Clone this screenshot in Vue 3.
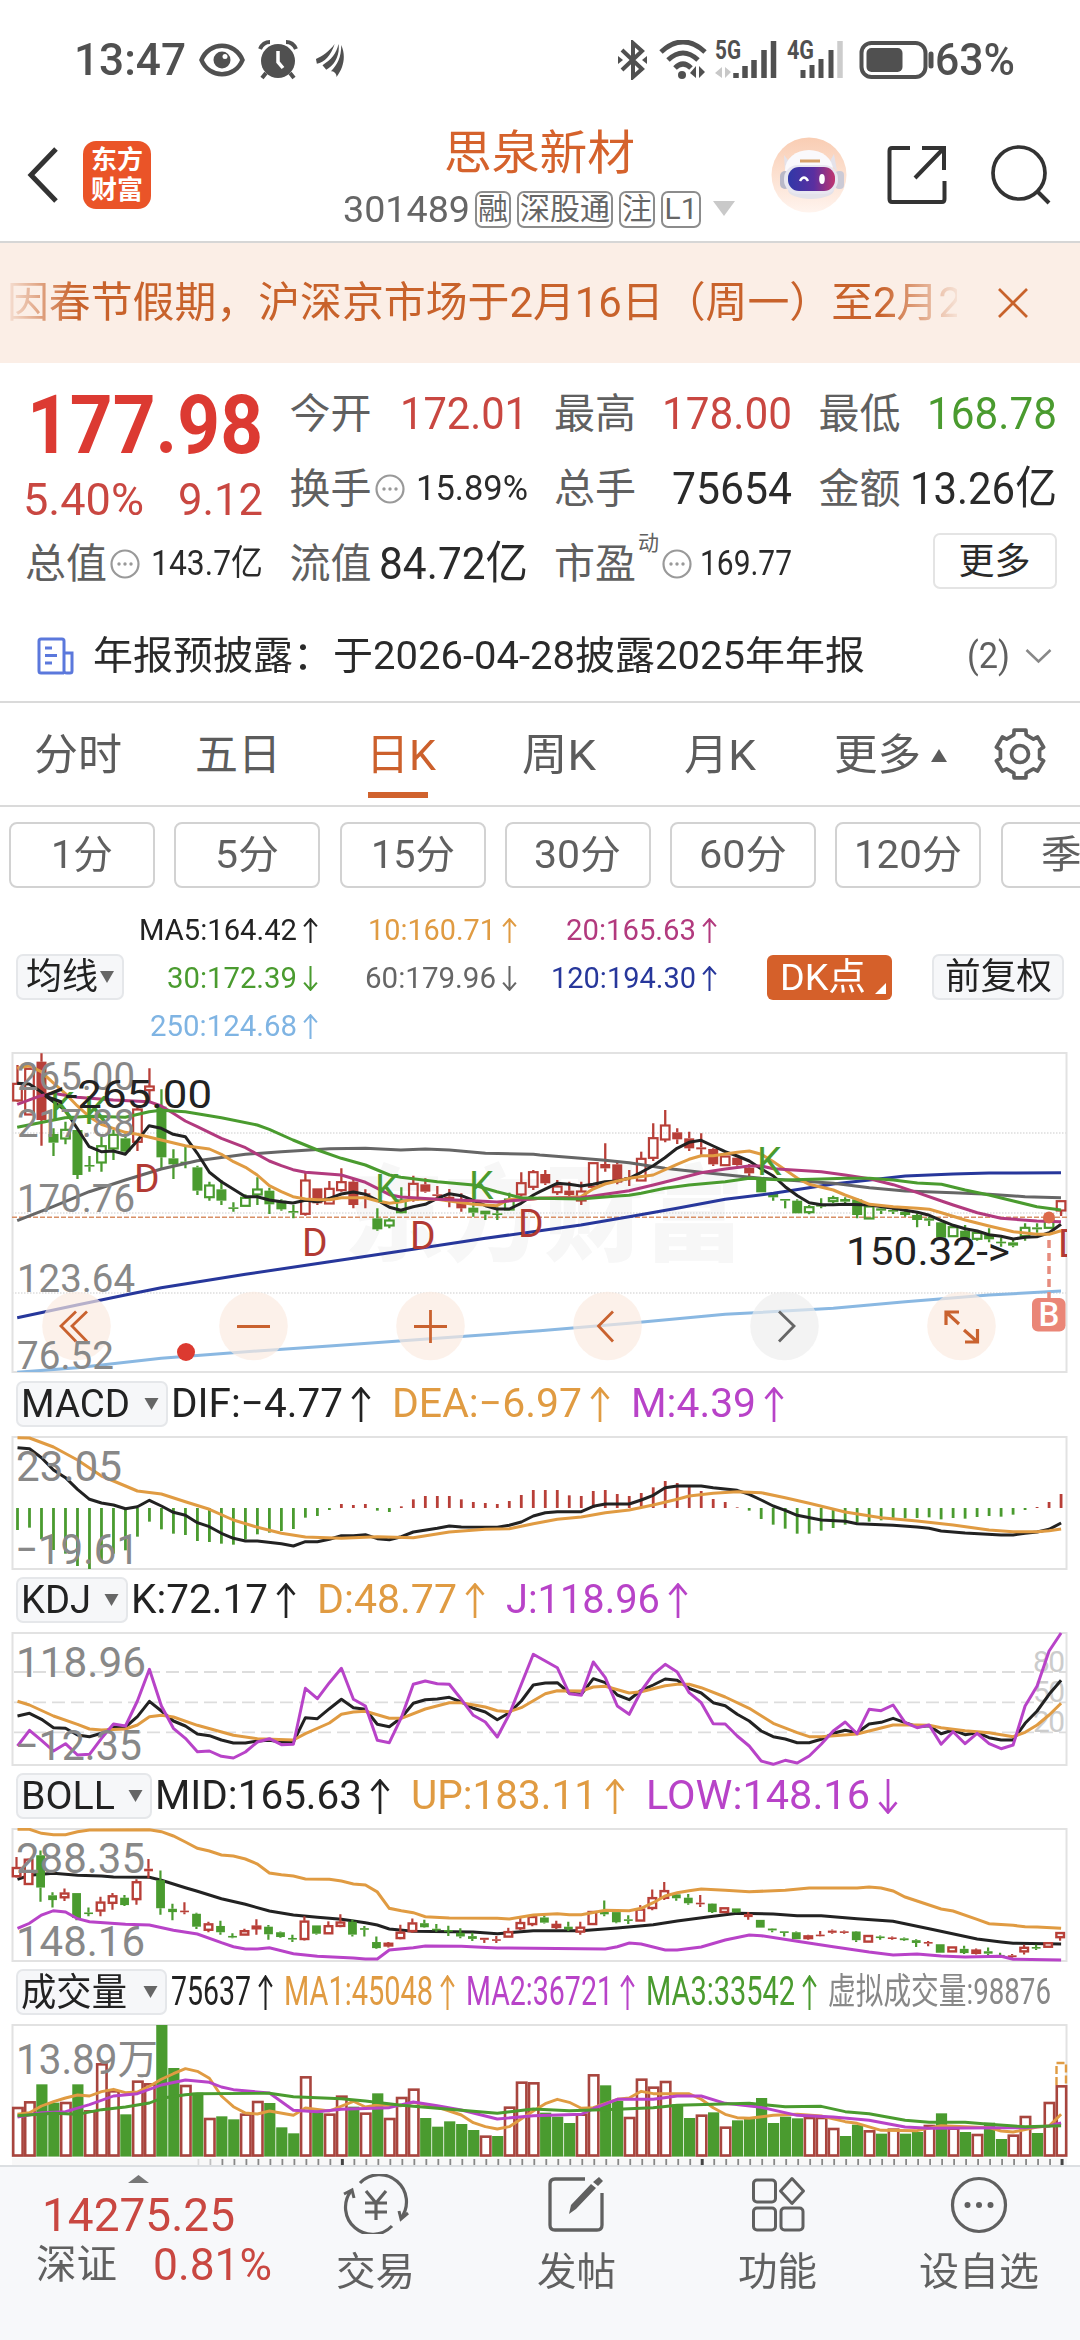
<script setup>
import { h } from 'vue'

// Condenses or widens a label so that it occupies exactly the given width.
const vFit = {
  mounted(el, { value }) {
    const natural = el.getBoundingClientRect().width
    el.style.transform = `scaleX(${value / natural})`
    el.style.marginRight = `${value - natural}px`
  }
}

const Arrow = (p) =>
  h('svg', { class: 'arrow', width: p.w, height: p.hh, viewBox: '0 0 20 36', preserveAspectRatio: 'none', style: { flex: 'none' } }, [
    h('path', {
      d: p.down ? 'M10 0V35M1.500 24L10 34.500L18.500 24' : 'M10 36V1M1.500 12L10 1.500L18.500 12',
      fill: 'none', stroke: 'currentColor', 'stroke-width': 2.7
    })
  ])
Arrow.props = ['w', 'hh', 'down']

const Dots = () =>
  h('svg', { class: 'dots', width: 30, height: 30, viewBox: '0 0 30 30', style: { flex: 'none' } }, [
    h('circle', { cx: 15, cy: 15, r: 13.5, fill: 'none', stroke: '#999', 'stroke-width': 2.2 }),
    ...[9, 15, 21].map((x) => h('circle', { cx: x, cy: 15, r: 1.7, fill: '#999' }))
  ])

const RED = '#b83f38', GREEN = '#4a9b2f'
const tabs = [['分时', 88, 34, 0], ['五日', 86, 194, 0], ['日K', 70, 366, 1], ['周K', 74, 521, 0], ['月K', 72, 683, 0]]
const periods = [['1分', 62], ['5分', 64], ['15分', 84], ['30分', 87], ['60分', 88], ['120分', 108], ['季K', 66]]
const mas = [
  ['MA5:164.42', 158, '#222', 0], ['10:160.71', 128, '#e09b42', 0], ['20:165.63', 130, '#b23a7e', 0],
  ['30:172.39', 130, '#4a9b2f', 1], ['60:179.96', 131, '#666', 1], ['120:194.30', 145, '#27379b', 0],
  ['250:124.68', 147, '#7fb4e3', 0]
]

// [kind, body top, body bottom, wick top, wick bottom]; R/G hollow, r/g filled
const raw = `R115,168,60,170 R70,210,68,210 r50,225,25,302 g267,293,250,333 G253,282,230,298 g255,390,255,402 g360,364,333,380 G302,354,275,380 G268,312,255,345 g280,320,265,325 R192,292,180,318 R123,137,70,175 g185,337,133,372 g340,358,313,402 g350,356,305,370 g367,437,362,450 G420,458,410,467 g433,467,405,480 g487,491,472,500 G457,484,448,484 G432,450,397,480 g437,478,428,507 g467,493,463,497 g498,503,480,520 R405,508,380,512 r430,475,430,480 R430,477,408,477 R410,437,370,440 r410,480,400,490 r445,450,433,490 g520,553,490,557 G525,543,520,550 G465,503,427,505 R415,465,392,470 r418,440,400,443 r448,452,423,465 r455,462,432,487 r470,490,445,500 g488,503,470,515 g497,508,497,525 g505,510,487,525 G462,495,443,495 R413,450,382,455 R380,427,375,435 r387,415,375,420 R423,443,405,450 r437,450,410,460 R438,468,410,480 R353,427,353,427 r357,370,295,380 r358,413,350,418 r397,400,375,423 R340,408,320,408 R278,340,235,348 R240,285,195,292 r262,283,250,297 r280,310,260,318 r307,313,265,330 r312,358,310,363 R333,362,333,362 r338,360,338,362 r368,385,357,400 g400,442,400,442 g447,457,445,467 g462,466,462,490 g467,505,463,505 G485,503,480,508 g480,483,460,490 G458,470,452,475 g462,470,457,475 g463,510,460,520 G483,522,483,522 g490,497,485,507 g495,500,490,507 g500,510,495,515 g510,525,505,547 g520,527,515,543 g532,578,532,578 G545,575,545,575 g557,580,540,585 G562,583,555,587 g570,583,550,592 g590,595,578,605 g592,602,585,607 G547,575,535,587 g547,553,535,563 G522,550,522,550 R467,498,467,513`.split(' ')
const bollKinds = 'RRggRggRRgRrggrgRggRRgggRgRRgggRRRgggggRRRRRgRgRRgggRRRggrgRgrggggRrRrgRgrggrgRgRggrRgRR'
const nx = (n) => 17.5 + 11.995 * n

function makeCandle(kind, v, n, map) {
  const [bt, bb, wt, wb] = v.map(map)
  const hollow = kind === 'R' || kind === 'G'
  const H = Math.max(bb - bt, 1.6)
  return { x: nx(n), bt, bb: bt + H, H, wt, wb, hollow: hollow && H > 2.5, c: kind.toLowerCase() === 'r' ? RED : GREEN }
}
const candles = raw.map((s, n) => makeCandle(s[0], s.slice(1).split(',').map(Number), n, (y) => 1045 + y / 3))
const bollCandles = raw.map((s, n) => makeCandle(bollKinds[n] || 'g', s.slice(1).split(',').map(Number), n, (y) => 1765 + (240 + 0.554 * y) / 3))

const W = 1568
const mainPath = (a, b) => {
  const p = (s, o) => s.split(' ').map((q) => { const [x, y] = q.split(',').map(Number); return `${((x + o) / 2.904).toFixed(1)},${(1045 + y / 3).toFixed(1)}` })
  return [...p(a, 0), ...p(b, W)].join(' ')
}
const mainLines = [
  ['#8ab8e2', mainPath('50,982 224,968 468,940 747,918 957,903 1270,880', '0,857 259,835 538,808 852,790 1061,770 1304,750 1513,738')],
  ['#27379b', mainPath('50,818 224,780 364,750 468,728 713,688 957,650 1200,613 1410,580', '0,557 119,540 259,515 398,490 538,463 678,445 852,417 957,405 1061,393 1200,387 1304,384 1513,383')],
  ['#666', mainPath('50,527 154,485 259,440 364,405 468,372 573,347 713,328 817,320 957,311 1061,310 1164,315 1235,312 1305,315 1410,325 1549,328', '0,330 119,340 189,346 259,353 363,370 468,382 573,393 643,400 748,407 852,415 957,428 1061,438 1200,443 1304,448 1409,455 1513,458')],
  ['#222', mainPath('50,115 85,117 119,140 135,155 189,195 224,250 259,305 294,320 329,318 364,328 399,287 433,242 468,250 503,268 538,275 573,325 608,382 643,410 678,433 713,455 747,455 782,465 817,470 851,474 887,466 922,470 957,460 991,447 1026,441 1061,448 1096,466 1131,487 1164,496 1200,485 1235,478 1270,460 1305,446 1340,452 1375,466 1410,482 1443,492 1479,492 1513,475 1549,450', '0,440 50,415 85,418 119,423 154,418 189,410 224,408 259,400 294,382 329,362 363,338 398,310 433,292 468,286 503,303 538,320 573,333 608,348 643,372 678,393 712,425 748,452 782,473 817,479 852,479 886,478 957,480 1026,490 1096,502 1131,511 1166,527 1200,541 1235,551 1270,558 1304,569 1339,574 1375,582 1409,577 1443,575 1479,563 1513,538')],
  ['#e09b42', mainPath('50,70 85,62 119,80 154,113 189,145 224,182 259,215 294,238 329,250 364,262 399,268 468,285 538,302 608,312 643,328 678,350 713,367 747,390 782,422 817,440 851,455 887,462 922,464 957,464 991,458 1061,458 1096,468 1131,475 1164,470 1200,463 1270,463 1305,468 1375,478 1443,482 1479,463 1549,462', '0,460 50,458 119,455 154,432 189,417 259,400 329,390 398,358 433,343 468,332 503,332 573,322 608,318 643,328 678,350 712,374 748,400 782,418 852,435 886,450 921,463 957,478 1026,485 1096,490 1131,493 1166,503 1235,525 1304,543 1375,560 1443,568 1479,568 1513,557')],
  ['#b23a7e', mainPath('50,178 119,152 154,145 224,157 329,165 433,170 468,183 503,205 538,228 573,245 643,280 713,308 782,348 817,362 851,374 887,382 991,390 1061,412 1096,430 1131,449 1164,456 1270,463 1375,467 1443,471 1513,465', '0,460 119,458 189,448 259,437 329,420 398,402 468,383 538,372 608,363 643,363 678,371 817,380 886,390 957,401 1026,419 1096,443 1166,468 1200,480 1270,503 1339,520 1443,528 1513,530')],
  ['#4a9b2f', mainPath('50,247 189,218 259,214 364,217 433,200 468,196 538,200 643,218 747,240 782,253 851,285 922,315 991,340 1061,360 1096,375 1131,390 1164,397 1270,410 1375,420 1443,440 1513,458', '0,460 119,462 224,453 259,451 294,445 363,430 433,420 538,410 608,400 712,405 817,402 886,400 957,400 1026,405 1096,414 1166,418 1235,435 1304,450 1375,468 1443,485 1513,495')]
]
const axis = [['265.00', 1090, 116], ['217.88', 1136.500, 116], ['170.76', 1211.500, 116], ['123.64', 1291.500, 116], ['76.52', 1368.500, 95]]
const marks = [
  ['K', 50, 1120], ['K', 84, 1124], ['D', 134, 1191.500], ['D', 302, 1256], ['K', 375, 1202], ['D', 410, 1248.500], ['K', 469, 1198.500],
  ['D', 518, 1236.500], ['K', 757, 1174.500], ['D', 1058, 1257]
]
const tools = [76.5, 253.5, 430.5, 607.5, 784.5, 961.5]

const sparse = (s, base) => s.split(' ').map((q) => { const [n, y] = q.split(',').map(Number); return `${nx(n).toFixed(1)},${(base + y / 3).toFixed(1)}` }).join(' ')
const dense = (s, base) => s.split(' ').map((y, n) => `${nx(n).toFixed(1)},${(base + y / 3).toFixed(1)}`).join(' ')

const macdBars = '462 455 490 522 533 570 579 558 533 523 482 437 460 473 477 495 498 503 506 490 475 470 465 459 425 420 402 384 387 384 404 408 391 370 360 360 360 370 378 381 384 375 357 342 342 342 358 360 345 342 354 360 351 334 315 321 333 345 369 378 394 404 429 446 458 473 473 464 456 446 440 437 433 430 427 426 424 430 426 428 423 420 422 416 402 393 378 354'.split(' ').map(Number)
const macdLines = [
  ['#222', sparse('0,215 1,218 2,245 3,282 4,305 5,340 6,370 7,381 8,387 9,398 10,392 11,373 12,390 13,409 14,418 15,440 16,452 17,472 18,487 19,495 20,495 22,503 23,510 24,497 25,497 26,490 27,479 28,479 29,476 30,488 31,491 32,482 33,468 35,457 36,450 37,453 40,454 41,448 42,438 43,420 44,410 45,407 47,407 48,391 49,384 51,384 52,372 53,358 54,335 55,330 57,330 58,335 60,343 61,355 62,372 63,390 64,403 65,418 67,432 69,436 70,443 73,448 75,453 76,457 77,465 79,471 82,477 83,477 84,472 85,468 86,460 87,441', 1375)],
  ['#e09b42', sparse('0,185 1,186 3,213 5,252 7,300 9,330 10,345 12,354 14,377 16,400 18,432 20,454 22,472 24,483 27,487 30,482 33,485 36,468 39,460 41,458 43,443 45,430 47,423 49,410 51,402 53,387 55,370 56,360 58,352 60,347 62,350 64,365 66,382 69,408 72,425 75,435 78,447 81,462 83,467 85,467 86,464 87,459', 1375)]
]
const kdjLines = [
  ['#222', dense('435 427 445 470 472 492 497 487 468 468 437 391 420 450 465 489 494 507 516 516 510 508 513 513 440 443 413 385 410 415 460 467 440 397 386 384 379 393 412 423 446 425 390 342 336 335 366 370 323 335 372 386 358 342 324 328 352 366 395 404 430 450 480 497 504 515 515 505 487 478 485 459 454 442 455 467 464 488 477 491 485 500 507 507 457 420 370 328', 1570)],
  ['#e09b42', sparse('0,391 1,402 3,435 5,460 6,474 7,477 9,474 10,462 11,437 12,433 13,438 15,463 18,493 20,503 23,507 24,488 26,456 27,430 28,423 29,421 31,442 32,442 34,414 36,395 37,395 39,408 40,419 41,422 42,410 44,368 45,359 47,360 48,348 49,346 51,366 52,362 54,344 55,340 56,340 57,350 59,378 61,412 63,457 65,485 66,497 67,497 70,489 73,462 75,462 76,463 77,470 79,479 81,485 83,497 84,484 85,462 86,432 87,397', 1570)],
  ['#b843c8', dense('525 478 508 540 518 552 550 502 459 465 390 295 405 472 502 542 540 556 561 543 513 503 521 520 352 383 335 292 385 405 508 515 440 340 330 338 340 385 433 453 498 430 340 250 270 290 368 373 273 320 405 430 360 310 280 303 365 395 458 459 495 525 570 580 568 576 555 520 480 453 488 415 419 402 455 470 462 520 482 518 487 518 533 522 405 345 240 186', 1570)]
]
const bollLines = [
  ['#e09b42', sparse('0,190 1,190 2,202 3,206 4,206 5,197 6,192 11,191 12,197 13,210 14,228 15,247 16,255 17,267 18,270 19,279 20,294 21,321 22,326 23,330 24,339 26,340 27,345 28,354 29,357 30,378 31,427 32,434 33,440 34,452 36,456 40,457 41,459 43,447 45,443 46,446 47,446 49,433 51,434 52,427 53,410 54,390 55,380 56,374 57,369 59,373 61,377 64,373 66,366 70,366 71,363 72,366 73,375 74,393 75,405 77,429 78,435 80,460 81,473 83,478 84,482 85,483 87,487', 1765)],
  ['#222', sparse('0,340 1,328 3,322 5,328 7,330 8,333 11,334 12,343 14,365 15,376 17,398 19,415 21,435 23,447 25,454 27,460 29,470 30,477 31,489 33,496 38,498 40,503 43,494 47,494 50,486 53,476 55,465 58,451 60,442 63,444 65,449 67,449 70,458 73,466 76,488 80,519 82,528 83,532 87,534', 1765)],
  ['#b843c8', sparse('0,487 1,472 2,447 3,434 4,438 5,458 6,467 9,475 11,477 13,493 15,504 17,530 18,542 19,549 20,549 21,545 23,563 25,571 28,576 29,579 30,579 31,552 33,545 34,540 37,541 40,546 49,549 50,542 51,531 52,534 54,552 55,552 57,543 59,522 61,507 62,509 65,526 68,542 71,558 73,567 75,564 77,570 79,573 82,571 83,580 87,582', 1765)]
]
const volumes = 'R438 R421 g370 g425 R423 g370 R448 R307 R388 g460 R359 R367 g192 g321 R372 g395 R471 g466 g475 R458 R420 g426 g499 g517 R346 g455 R458 R404 g437 R455 g397 R471 R408 R383 g471 g497 g481 g489 g507 R524 g525 R437 R362 R364 g455 g467 g486 R458 R340 g373 g420 R468 R353 R377 R360 g430 g471 R461 g454 R497 g478 g470 g411 g486 g467 g472 R468 R468 R501 g525 g491 R508 g518 R503 g518 g513 R492 g457 R500 g513 R519 g485 g534 R521 R465 g516 R423 R373'
  .split(' ').map((s, n) => ({ x: nx(n), up: s[0] === 'R', y: 1960 + +s.slice(1) / 3 }))
const volLines = [
  ['#e09b42', sparse('0,460 1,455 2,435 3,422 4,411 5,402 6,405 7,392 8,385 9,395 10,393 11,376 12,355 13,338 14,323 15,331 16,352 17,405 18,437 19,456 20,459 21,450 23,463 24,441 26,450 28,421 29,438 30,432 32,434 33,424 35,438 37,462 38,485 39,497 40,504 41,497 43,450 44,428 45,415 46,424 47,442 48,440 50,415 51,411 52,391 53,398 56,398 57,415 58,440 59,460 60,470 61,472 63,463 65,460 67,465 69,482 70,487 72,508 75,509 77,494 81,500 82,510 83,513 85,498 86,495 87,460', 1960)],
  ['#b843c8', sparse('0,468 2,455 4,452 6,431 8,405 10,398 12,372 14,357 16,364 17,378 18,386 21,396 23,448 25,452 27,445 31,440 33,423 35,434 37,447 40,474 43,464 47,460 48,443 50,415 53,415 55,405 57,405 59,427 62,439 65,463 68,468 71,478 74,498 76,502 79,501 82,500 84,500 86,495 87,486', 1960)],
  ['#4a9b2f', sparse('0,464 3,457 5,460 7,446 9,438 11,426 12,412 14,401 15,398 21,397 23,407 27,413 29,420 32,433 37,448 40,457 43,444 46,449 50,445 53,440 55,433 61,427 64,437 67,436 69,452 71,458 74,478 76,484 79,484 81,490 84,497 87,494', 1960)]
]
const ticks = Array.from({ length: 73 }, (_, i) => ({ x: nx(i + 15), strong: i === 12 || i === 42 || i === 72, o: i === 0 ? 0.25 : i === 1 ? 0.5 : 1 }))

const heads = {
  macd: { name: 'MACD', nw: 109, bw: 152, items: [['DIF:-4.77', 172, '#222', 0], ['DEA:-6.97', 190, '#e09b42', 0], ['M:4.39', 125, '#b843c8', 0]] },
  kdj: { name: 'KDJ', nw: 70, bw: 112, items: [['K:72.17', 137, '#222', 0], ['D:48.77', 140, '#e09b42', 0], ['J:118.96', 154, '#b843c8', 0]] },
  boll: { name: 'BOLL', nw: 94, bw: 136, items: [['MID:165.63', 207, '#222', 0], ['UP:183.11', 186, '#e09b42', 0], ['LOW:148.16', 224, '#b843c8', 1]] }
}

const gear = Array.from({ length: 6 }, (_, k) => {
  const pt = (r, a) => { const t = ((-90 + 60 * k + a) * Math.PI) / 180; return `${(27 + r * Math.cos(t)).toFixed(1)},${(27 + r * Math.sin(t)).toFixed(1)}` }
  return [pt(20, -18), pt(24.5, -14), pt(24.5, 14), pt(20, 18)].join(' ')
}).join(' ')
</script>

<template>
  <div class="app">
    <div class="status">
      <span v-fit="112" class="t clock">13:47</span>
      <svg width="46" height="36" viewBox="0 0 46 36" class="eye"><path d="M2.500 18C10 -1 36 -1 43.500 18C36 37 10 37 2.500 18Z" fill="none" stroke="#505050" stroke-width="4.500" /><circle cx="23" cy="18" r="8.500" fill="#505050" /><circle cx="26" cy="14.500" r="2.500" fill="#fff" /></svg>
      <svg width="40" height="40" viewBox="0 0 40 40" class="alarm"><circle cx="20" cy="21" r="17" fill="#505050" /><path d="M2 9Q5 2 12 2M38 9Q35 2 28 2M8 33L4 38M32 33L36 38" stroke="#505050" stroke-width="4" fill="none" /><path d="M20 11V22L25 28" stroke="#fff" stroke-width="3.500" fill="none" /></svg>
      <svg width="30" height="36" viewBox="0 0 32 36" class="leaf"><path d="M1 17C8 14 15 9 21 1C17 13 10 21 2 22ZM8 23.500C17 18 23 11 25 1C27 12 21 24 12 28.500ZM17 30C24 23 28 15 28 2C33 13 31 26 23 36C23 32 20 30 17 30Z" fill="#505050" /></svg>
      <i class="grow"></i>
      <svg width="29" height="40" viewBox="0 0 29 40" class="bt"><path d="M4 10L24 29L15 37V3L24 11L4 30" fill="none" stroke="#505050" stroke-width="4" /><path d="M0 16L5 20L0 24ZM29 16L24 20L29 24Z" fill="#505050" /></svg>
      <svg width="48" height="40" viewBox="0 0 48 40" class="wifi"><path d="M2 12Q24 -8 46 12M9 20Q24 6 39 20M16 28Q24 20 32 28" fill="none" stroke="#505050" stroke-width="5" /><circle cx="23" cy="35" r="4" fill="#505050" /><path d="M31 33L37 26V38ZM40 26V38L46 32Z" fill="#505050" /></svg>
      <svg width="64" height="42" viewBox="0 0 64 42" class="sig"><text x="1" y="20" textLength="26" lengthAdjust="spacingAndGlyphs">5G</text><path d="M1 34L8 28V39ZM11 28V39L17 33Z" fill="#c8c8c8" /><path d="M22 34V39M31 27V39M40 21V39M50 11V39M59.500 2V39" stroke="#505050" stroke-width="5.500" /></svg>
      <svg width="60" height="42" viewBox="0 0 60 42" class="sig s2"><text x="1" y="20" textLength="27" lengthAdjust="spacingAndGlyphs">4G</text><path d="M17 31V39M26 26V39M35 20V39M45 11V39" stroke="#505050" stroke-width="5" /><path d="M54 2V39" stroke="#ccc" stroke-width="5.500" /></svg>
      <svg width="76" height="40" viewBox="0 0 76 40"><rect x="2.500" y="3" width="64" height="34" rx="10" fill="none" stroke="#505050" stroke-width="4" /><rect x="7.500" y="8" width="36" height="24" rx="5" fill="#505050" /><path d="M72 14V26" stroke="#505050" stroke-width="5" stroke-linecap="round" /></svg>
      <span v-fit="80" class="t clock">63%</span>
    </div>

    <header class="bar">
      <svg class="back" width="33" height="56" viewBox="0 0 33 56"><path d="M29 2L4 28L29 54" fill="none" stroke="#333" stroke-width="5" /></svg>
      <div class="logo"><span>东方</span><span>财富</span></div>
      <div class="head-mid">
        <h1 v-fit="191" class="t title">思泉新材</h1>
        <div class="code">
          <span v-fit="127" class="t">301489</span>
          <b class="tag w1">融</b><b class="tag w3">深股通</b><b class="tag w1">注</b><b class="tag w2">L1</b>
          <svg width="22" height="16" viewBox="0 0 22 16"><path d="M0 0H22L11 15Z" fill="#c9c9c9" /></svg>
        </div>
      </div>
      <svg class="robot" width="76" height="76" viewBox="0 0 76 76">
        <defs>
          <linearGradient id="rb" x1="0" y1="0" x2="0" y2="1"><stop offset="0" stop-color="#f9cdb3" /><stop offset="1" stop-color="#fff4ee" /></linearGradient>
          <linearGradient id="face" x1="0" y1="0" x2="1" y2="0"><stop offset="0" stop-color="#3038a8" /><stop offset=".55" stop-color="#5a2fa0" /><stop offset="1" stop-color="#c0356f" /></linearGradient>
        </defs>
        <circle cx="38" cy="38" r="37.500" fill="url(#rb)" />
        <path d="M13 18L19 26L14 34ZM63 17L66 34L58 26Z" fill="#e4e2ea" />
        <ellipse cx="38" cy="33" rx="24" ry="20" fill="#faf9fc" />
        <ellipse cx="40" cy="53" rx="23" ry="9" fill="#e3e2ea" />
        <rect x="9" y="34" width="10" height="18" rx="5" fill="#b9b8c8" /><rect x="64" y="34" width="9" height="18" rx="4" fill="#cbcad6" />
        <rect x="13" y="28" width="54" height="29" rx="14" fill="#e8e7f0" />
        <rect x="17" y="30" width="47" height="24" rx="11" fill="url(#face)" />
        <path d="M29 44Q33 37 37 44" fill="none" stroke="#fff" stroke-width="2.500" /><ellipse cx="51" cy="42" rx="2.800" ry="5" fill="#fff" />
        <path d="M29 24H49" stroke="#d8a26a" stroke-width="3" />
      </svg>
      <svg class="share" width="60" height="60" viewBox="0 0 60 60"><path d="M23 3H5Q2.500 3 2.500 6V54Q2.500 57 5 57H55Q57.500 57 57.500 54V36M35 3H57V25M57 3L28 33" fill="none" stroke="#333" stroke-width="4" /></svg>
      <svg class="search" width="60" height="62" viewBox="0 0 60 62"><circle cx="28" cy="29" r="26" fill="none" stroke="#333" stroke-width="3.700" /><path d="M46 47L58 59" stroke="#333" stroke-width="4" /></svg>
    </header>

    <div class="notice">
      <div class="marquee"><span v-fit="955" class="t">因春节假期，沪深京市场于2月16日（周一）至2月2</span></div>
      <svg width="30" height="30" viewBox="0 0 30 30"><path d="M1 1L29 29M29 1L1 29" stroke="#c8622b" stroke-width="2.700" /></svg>
    </div>

    <section class="quote">
      <div class="now">
        <div class="price"><span v-fit="236" class="t">177.98</span></div>
        <div class="chg"><span v-fit="121" class="t">5.40%</span><span v-fit="85" class="t">9.12</span></div>
      </div>
      <div class="cell"><label v-fit="82" class="t">今开</label><span v-fit="128" class="t red">172.01</span></div>
      <div class="cell"><label v-fit="82" class="t">最高</label><span v-fit="130" class="t red">178.00</span></div>
      <div class="cell"><label v-fit="82" class="t">最低</label><span v-fit="130" class="t green">168.78</span></div>
      <div class="cell"><label v-fit="82" class="t">换手</label><Dots /><span v-fit="112" class="t sm push">15.89%</span></div>
      <div class="cell"><label v-fit="82" class="t">总手</label><span v-fit="120" class="t">75654</span></div>
      <div class="cell"><label v-fit="82" class="t">金额</label><span v-fit="147" class="t">13.26亿</span></div>
      <div class="cell"><label v-fit="82" class="t">总值</label><Dots /><span v-fit="112" class="t sm push">143.7亿</span></div>
      <div class="cell"><label v-fit="82" class="t">流值</label><span v-fit="149" class="t">84.72亿</span></div>
      <div class="cell"><label v-fit="82" class="t">市盈</label><sup class="t">动</sup><Dots /><span v-fit="92" class="t sm push">169.77</span></div>
      <div class="cell end"><button class="more">更多</button></div>
    </section>

    <div class="news">
      <svg width="37" height="38" viewBox="0 0 37 38"><path d="M27 36H4Q2 36 2 34V4Q2 2 4 2H25Q27 2 27 4V34Q27 36 30 36H33Q35 36 35 34V16H27M8 11H15M8 18.500H20M8 26H15" fill="none" stroke="#5b78dc" stroke-width="3" /></svg>
      <span v-fit="772" class="t headline">年报预披露：于2026-04-28披露2025年年报</span>
      <span v-fit="43" class="t count">(2)</span>
      <svg class="chev" width="27" height="16" viewBox="0 0 27 16"><path d="M1.500 2L13.500 13.500L25.500 2" fill="none" stroke="#888" stroke-width="2.500" /></svg>
    </div>

    <nav class="tabs">
      <div v-for="(t, i) in tabs" :key="t[0]" class="tab" :class="{ on: t[3], ['tab' + i]: true }">
        <span v-fit="t[1]" class="t">{{ t[0] }}</span>
      </div>
      <div class="tab tab-more"><span v-fit="87" class="t">更多</span><svg width="16" height="13" viewBox="0 0 16 13"><path d="M8 0L16 13H0Z" fill="#5c5c5c" /></svg></div>
      <svg class="gear" width="54" height="54" viewBox="0 0 54 54"><polygon :points="gear" fill="none" stroke="#606060" stroke-width="3.700" stroke-linejoin="round" /><circle cx="27" cy="27" r="8.500" fill="none" stroke="#606060" stroke-width="3.700" /></svg>
    </nav>

    <div class="periods">
      <div v-for="p in periods" :key="p[0]" class="pill"><span v-fit="p[1]" class="t">{{ p[0] }}</span></div>
    </div>

    <div class="ma-row">
      <div class="chip ma-chip"><span v-fit="72" class="t">均线</span><svg width="14" height="12" viewBox="0 0 14 12"><path d="M0 0H14L7 12Z" fill="#666" /></svg></div>
      <div class="ma-grid">
        <div v-for="m in mas" :key="m[0]" class="ma" :style="{ color: m[2] }"><span v-fit="m[1]" class="t">{{ m[0] }}</span><Arrow :w="15" :hh="25" :down="m[3]" /></div>
      </div>
      <div class="dk"><span v-fit="86" class="t">DK点</span><svg width="11" height="11" viewBox="0 0 11 11"><path d="M11 0V11H0Z" fill="#fff" /></svg></div>
      <div class="chip adj"><span v-fit="107" class="t">前复权</span></div>
    </div>

    <svg class="chart" width="1080" height="323" viewBox="0 1051 1080 323">
      <defs><clipPath id="frame"><rect x="12" y="1053" width="1055" height="319" /></clipPath></defs>
      <text class="mark-bg" x="344" y="1253" textLength="400" lengthAdjust="spacingAndGlyphs">东方财富</text>
      <path d="M12 1133H1067M12 1213H1067M12 1293H1067" stroke="#ddd" stroke-width="1.500" stroke-dasharray="1.500 1.500" />
      <rect x="12.500" y="1053" width="1054" height="319" fill="none" stroke="#e2e2e2" stroke-width="2" />
      <path d="M12 1217.200H1067" stroke="#d89067" stroke-width="1.500" stroke-dasharray="5 2" />
      <g clip-path="url(#frame)">
        <g v-for="(c, i) in candles" :key="i" :stroke="c.c" :fill="c.hollow ? '#fff' : c.c">
          <path :d="`M${c.x} ${c.wt}V${c.bt}M${c.x} ${c.bb}V${c.wb}`" stroke-width="2.300" />
          <rect v-if="c.hollow" :x="c.x - 4.300" :y="c.bt + 0.5" width="8.600" :height="c.H - 1" stroke-width="2.200" fill-opacity="0" />
          <rect v-else :x="c.x - 5" :y="c.bt" width="10" :height="c.H" stroke="none" />
        </g>
        <polyline v-for="l in mainLines" :key="l[0]" :points="l[1]" fill="none" :stroke="l[0]" stroke-width="3" stroke-linejoin="round" />
        <text v-for="(m, i) in marks" :key="i" class="mk" :x="m[1]" :y="m[2]" :fill="m[0] === 'K' ? '#4a9b2f' : '#b23a34'">{{ m[0] }}</text>
      </g>
      <g v-for="(t, i) in tools" :key="t"><circle :cx="t" cy="1326" r="34.300" :fill="i === 4 ? '#ededed' : '#faeae0'" fill-opacity=".68" /></g>
      <g fill="none" stroke="#c9622f" stroke-width="2.800">
        <path d="M76 1311.500L61 1326L76 1341.500M87 1311.500L72 1326L87 1341.500M237 1326.500H270M414 1326.500H447M430.500 1310V1343" />
        <path d="M613 1311.500L598.500 1326L613 1341.500" />
        <path d="M959 1312H946V1325M946.500 1312.500L959 1324M965 1342H977.500V1329M977 1341.500L964 1330" stroke-width="3.200" />
        <path d="M779 1311.500L794 1326L779 1341.500" stroke="#666" />
      </g>
      <g fill="#888" class="ax"><text v-for="a in axis" :key="a[0]" x="17" :y="a[1]" :textLength="a[2] + 2" lengthAdjust="spacingAndGlyphs">{{ a[0] }}</text></g>
      <text class="ax" x="43" y="1108" fill="#222" textLength="169" lengthAdjust="spacingAndGlyphs">&lt;-265.00</text>
      <text class="ax" x="846" y="1265" fill="#222" textLength="164" lengthAdjust="spacingAndGlyphs">150.32-&gt;</text>
      <circle cx="186" cy="1352" r="9" fill="#dc3a30" />
      <circle cx="1049" cy="1217.500" r="6" fill="#dc6a4a" />
      <path d="M1049 1240V1298" stroke="#e68c7e" stroke-width="3.500" stroke-dasharray="8 5" />
      <rect x="1032" y="1298" width="33.500" height="33.500" rx="6" fill="#ea8677" />
      <text class="bee" x="1048.800" y="1326" text-anchor="middle">B</text>
    </svg>

    <div class="sub-head">
      <div class="chip" :style="{ width: heads.macd.bw + 'px' }"><span v-fit="heads.macd.nw" class="t">MACD</span><svg width="15" height="12" viewBox="0 0 14 12"><path d="M0 0H14L7 12Z" fill="#666" /></svg></div>
      <div v-for="m in heads.macd.items" :key="m[0]" class="val" :style="{ color: m[2] }"><span v-fit="m[1]" class="t">{{ m[0].replace('-', '−') }}</span><Arrow :w="20" :hh="35" :down="m[3]" /></div>
    </div>
    <svg class="chart" width="1080" height="134" viewBox="0 1435 1080 134">
      <rect x="12.500" y="1436" width="1054" height="132" fill="none" stroke="#e2e2e2" stroke-width="2" />
      <path v-for="(b, i) in macdBars" :key="i" :d="`M${nx(i)} 1507V${1375 + b / 3}`" :stroke="b < 396 ? RED : GREEN" stroke-width="2.800" />
      <polyline v-for="l in macdLines" :key="l[0]" :points="l[1]" fill="none" :stroke="l[0]" stroke-width="3" stroke-linejoin="round" />
      <g fill="#888" class="ax2"><text x="16" y="1480" textLength="106" lengthAdjust="spacingAndGlyphs">23.05</text><text x="15" y="1562.500" textLength="124" lengthAdjust="spacingAndGlyphs">−19.61</text></g>
    </svg>

    <div class="sub-head">
      <div class="chip" :style="{ width: heads.kdj.bw + 'px' }"><span v-fit="heads.kdj.nw" class="t">KDJ</span><svg width="15" height="12" viewBox="0 0 14 12"><path d="M0 0H14L7 12Z" fill="#666" /></svg></div>
      <div v-for="m in heads.kdj.items" :key="m[0]" class="val" :style="{ color: m[2] }"><span v-fit="m[1]" class="t">{{ m[0] }}</span><Arrow :w="20" :hh="35" :down="m[3]" /></div>
    </div>
    <svg class="chart" width="1080" height="134" viewBox="0 1631 1080 134">
      <rect x="12.500" y="1632" width="1054" height="132" fill="none" stroke="#e2e2e2" stroke-width="2" />
      <path d="M14 1671H1066M14 1701.300H1066M14 1731.300H1066" stroke="#ddd" stroke-width="1.800" stroke-dasharray="13 6" />
      <g class="ax3" fill="#ccc"><text x="1033" y="1671" textLength="32">80</text><text x="1033" y="1701" textLength="32">50</text><text x="1033" y="1731" textLength="32">20</text></g>
      <polyline v-for="l in kdjLines" :key="l[0]" :points="l[1]" fill="none" :stroke="l[0]" stroke-width="3" stroke-linejoin="round" />
      <g fill="#888" class="ax2"><text x="16" y="1676" textLength="130" lengthAdjust="spacingAndGlyphs">118.96</text><text x="15" y="1759" textLength="127" lengthAdjust="spacingAndGlyphs">−12.35</text></g>
    </svg>

    <div class="sub-head">
      <div class="chip" :style="{ width: heads.boll.bw + 'px' }"><span v-fit="heads.boll.nw" class="t">BOLL</span><svg width="15" height="12" viewBox="0 0 14 12"><path d="M0 0H14L7 12Z" fill="#666" /></svg></div>
      <div v-for="m in heads.boll.items" :key="m[0]" class="val" :style="{ color: m[2] }"><span v-fit="m[1]" class="t">{{ m[0] }}</span><Arrow :w="20" :hh="35" :down="m[3]" /></div>
    </div>
    <svg class="chart" width="1080" height="134" viewBox="0 1827 1080 134">
      <rect x="12.500" y="1828" width="1054" height="132" fill="none" stroke="#e2e2e2" stroke-width="2" />
      <polyline :points="bollLines[1][1]" fill="none" stroke="#222" stroke-width="3" />
      <g v-for="(c, i) in bollCandles" :key="i" :stroke="c.c" :fill="c.c">
        <path :d="`M${c.x - 1} ${c.wt}V${c.bt}M${c.x - 1} ${c.bb}V${c.wb}`" stroke-width="2.200" />
        <rect v-if="c.hollow" :x="c.x - 4.700" :y="c.bt + 0.800" width="7.600" :height="Math.max(c.H - 1.600, 1)" stroke-width="2.400" fill="#fff" />
        <rect v-else :x="c.x - 5.300" :y="c.bt" width="8.800" :height="c.H" stroke="none" />
      </g>
      <polyline :points="bollLines[0][1]" fill="none" stroke="#e09b42" stroke-width="3" />
      <polyline :points="bollLines[2][1]" fill="none" stroke="#b843c8" stroke-width="3" />
      <g fill="#888" class="ax2"><text x="16" y="1872" textLength="129" lengthAdjust="spacingAndGlyphs">288.35</text><text x="16" y="1955" textLength="129" lengthAdjust="spacingAndGlyphs">148.16</text></g>
    </svg>

    <div class="sub-head vol-head">
      <div class="chip vol-chip"><span v-fit="106" class="t">成交量</span><svg width="15" height="12" viewBox="0 0 14 12"><path d="M0 0H14L7 12Z" fill="#666" /></svg></div>
      <div class="val v0"><span v-fit="80" class="t">75637</span><Arrow :w="15" :hh="35" /></div>
      <div class="val v1"><span v-fit="149" class="t">MA1:45048</span><Arrow :w="15" :hh="35" /></div>
      <div class="val v2"><span v-fit="147" class="t">MA2:36721</span><Arrow :w="15" :hh="35" /></div>
      <div class="val v3"><span v-fit="149" class="t">MA3:33542</span><Arrow :w="15" :hh="35" /></div>
      <div class="val v4"><span v-fit="223" class="t">虚拟成交量:98876</span></div>
    </div>
    <svg class="chart" width="1080" height="141" viewBox="0 2023 1080 141">
      <rect x="12.500" y="2024" width="1054" height="131" fill="none" stroke="#e2e2e2" stroke-width="2" />
      <g v-for="(b, i) in volumes" :key="i">
        <rect v-if="b.up" :x="b.x - 4.300" :y="b.y + 1" width="9.400" :height="2153.500 - b.y" fill="#fff" stroke="#a8453e" stroke-width="2.600" />
        <rect v-else :x="b.x - 5.200" :y="b.y" width="11.200" :height="2155.500 - b.y" fill="#4a9b2f" />
      </g>
      <path d="M1056.500 2084V2062H1066V2084" fill="none" stroke="#e09b42" stroke-width="2.400" stroke-dasharray="8 3" />
      <polyline v-for="l in volLines" :key="l[0]" :points="l[1]" fill="none" :stroke="l[0]" stroke-width="2.900" stroke-linejoin="round" />
      <text class="ax2" x="16" y="2073" fill="#888" textLength="142" lengthAdjust="spacingAndGlyphs">13.89万</text>
      <rect x="12" y="2157" width="1055" height="7" fill="#f8f8f8" />
      <path v-for="t in ticks" :key="t.x" :d="`M${t.x + 1} 2158V2164`" :stroke="t.strong ? '#444' : '#888'" :stroke-width="t.strong ? 3 : 1.800" :opacity="t.o" />
    </svg>

    <footer class="dock">
      <div class="index">
        <svg width="21" height="8" viewBox="0 0 21 8"><path d="M10.500 0L21 8H0Z" fill="#777" /></svg>
        <div class="ix1"><span v-fit="193" class="t">14275.25</span></div>
        <div class="ix2"><span v-fit="81" class="t gray">深证</span><span v-fit="119" class="t">0.81%</span></div>
      </div>
      <div class="act">
        <svg width="66" height="60" viewBox="0 0 66 60"><path d="M17 9A27 27 0 0 1 58 44M49 52A27 27 0 0 1 8 17" fill="none" stroke="#606060" stroke-width="3.200" /><path d="M1 20L9 16L11 24M65 39L58 45L56 37" fill="none" stroke="#606060" stroke-width="3" /><path d="M23 17L33 29L43 17M33 29V46M22 29H44M22 38H44" fill="none" stroke="#606060" stroke-width="3.200" /></svg>
        <span v-fit="79" class="t">交易</span>
      </div>
      <div class="act">
        <svg width="60" height="60" viewBox="0 0 60 60"><path d="M38 5H8Q3 5 3 10V51Q3 56 8 56H50Q55 56 55 51V19" fill="none" stroke="#606060" stroke-width="3.300" /><path d="M22 40L24 31L44 10L49 14L29 35ZM46 8L52 3L56 7L51 12Z" fill="#606060" /></svg>
        <span v-fit="79" class="t">发帖</span>
      </div>
      <div class="act">
        <svg width="56" height="60" viewBox="0 0 56 60"><g fill="none" stroke="#606060" stroke-width="3"><rect x="3.500" y="6" width="22" height="22" rx="3.500" /><rect x="3.500" y="34" width="22" height="22" rx="3.500" /><rect x="31" y="34" width="22" height="22" rx="3.500" /><path d="M42 4.500L53.500 17L42 29.500L30.500 17Z" stroke-linejoin="round" /></g></svg>
        <span v-fit="79" class="t">功能</span>
      </div>
      <div class="act">
        <svg width="60" height="60" viewBox="0 0 60 60"><circle cx="30" cy="31" r="26.500" fill="none" stroke="#606060" stroke-width="3.200" /><circle cx="18.500" cy="31" r="3" fill="#606060" /><circle cx="30" cy="31" r="3" fill="#606060" /><circle cx="41.500" cy="31" r="3" fill="#606060" /></svg>
        <span v-fit="120" class="t">设自选</span>
      </div>
    </footer>
  </div>
</template>

<style>
body { margin: 0; background: #fff; }
</style>

<style scoped>
.app { width: 1080px; height: 2340px; overflow: hidden; background: #fff; color: #222; font-family: Roboto, "Noto Sans CJK SC", sans-serif; display: flex; flex-direction: column; }
.app > * { flex: none; box-sizing: border-box; }
svg { flex: none; display: block; }
.t { display: inline-block; white-space: nowrap; transform-origin: 0 50%; flex: none; }
.grow { flex: 1; }

.status { height: 120px; padding: 0 65px 0 74px; display: flex; align-items: center; color: #505050; }
.clock { font-size: 45px; font-weight: 500; line-height: 50px; }
.eye { margin-left: 13px; }
.alarm { margin-left: 13px; }
.leaf { margin-left: 17px; }
.wifi { margin-left: 12px; }
.sig { margin-left: 7px; overflow: visible; }
.s2 { margin: 0 13px 0 8px; }
.sig text { font-size: 25px; font-weight: 700; fill: #505050; }

.bar { height: 123px; border-bottom: 2px solid #d6d6d6; padding: 0 28px 11px 27px; display: flex; align-items: center; }
.logo { margin-left: 23px; width: 68px; height: 68px; border-radius: 13px; background: #ea5428; color: #fff; display: flex; flex-direction: column; align-items: center; justify-content: center; font-size: 26px; line-height: 30px; font-weight: 700; }
.head-mid { margin-left: 192px; width: 392px; align-self: flex-start; display: flex; flex-direction: column; align-items: center; }
.title { margin: 0; font-size: 47px; line-height: 66px; height: 61px; font-weight: 400; color: #d5622c; }
.code { height: 56px; display: flex; align-items: center; color: #666; font-size: 37px; width: 392px; }
.tag { font-weight: 400; font-size: 30px; box-sizing: border-box; height: 37px; line-height: 32px; border: 2px solid #8c8c8c; border-radius: 7px; text-align: center; margin-right: 6px; }
.w1 { width: 36px; } .w3 { width: 96px; } .w2 { width: 40px; margin-right: 12px; }
.code .t + .tag { margin-left: 5px; }
.robot { margin-left: 36px; }
.share { margin-left: 40px; }
.search { margin-left: 44px; }

.notice { height: 120px; background: #fbeee6; display: flex; align-items: center; color: #c8622b; }
.marquee { width: 957px; padding-left: 7px; box-sizing: border-box; overflow: hidden; font-size: 42px; line-height: 60px; margin-right: 41px; -webkit-mask-image: linear-gradient(90deg, transparent 0, #000 75px, #000 880px, transparent 965px); mask-image: linear-gradient(90deg, transparent 0, #000 75px, #000 880px, transparent 965px); }

.quote { height: 238px; padding: 13px 25px 0; display: grid; grid-template-columns: repeat(4, 238px); column-gap: 26.500px; grid-template-rows: 75px 75px 75px; color: #2a2a2a; }
.now { grid-row: 1 / 3; color: #dc3a32; }
.price { height: 97px; line-height: 98px; font-size: 82px; font-weight: 700; padding-left: 2px; }
.chg { height: 54px; line-height: 54px; font-size: 45px; display: flex; justify-content: space-between; color: #c94741; margin-left: -2px; }
.cell { display: flex; align-items: center; justify-content: space-between; font-size: 45px; line-height: 60px; }
.cell label { font-size: 41px; color: #606060; }
.cell .sm { font-size: 35px; }
.cell .push { margin-left: auto; }
.cell .dots { margin-left: 3px; }
.cell sup { font-size: 21px; line-height: 24px; align-self: flex-start; margin-top: 5px; margin-left: 2px; color: #606060; }
.cell.end { justify-content: flex-end; align-items: flex-start; }
.red { color: #c94741; }
.green { color: #4a9b2f; }
.more { box-sizing: border-box; width: 124px; height: 56px; border: 2px solid #e4e4e4; border-radius: 7px; background: #fff; font: 36px/44px "Noto Sans CJK SC", sans-serif; color: #2a2a2a; padding: 0 0 6px; margin-top: 7px; }

.news { height: 102px; border-bottom: 2px solid #dadada; padding: 10px 0 0 37px; display: flex; align-items: center; font-size: 39px; line-height: 60px; color: #2a2a2a; }
.headline { margin-left: 19px; }
.count { margin-left: 102px; color: #606060; font-size: 36px; }
.chev { margin-left: 15px; }

.tabs { height: 104px; border-bottom: 2px solid #dadada; display: flex; align-items: center; padding-left: 34px; font-size: 43px; color: #5c5c5c; }
.tab { height: 102px; line-height: 104px; box-sizing: border-box; display: flex; align-items: center; padding-top: 2px; }
.tab1 { margin-left: 73px; } .tab2 { margin-left: 85px; } .tab3 { margin-left: 86px; } .tab4 { margin-left: 88px; }
.tab-more { margin-left: 78px; gap: 10px; width: 113px; }
.on { color: #cc602c; background: linear-gradient(#d0622d, #d0622d) 2px 89px / 60px 6px no-repeat; }
.gear { margin-left: 46px; }

.periods { height: 81px; padding: 15px 0 0 9px; display: flex; gap: 19.300px; overflow: hidden; }
.pill { flex: none; box-sizing: border-box; width: 146px; height: 66px; border: 2px solid #d2d2d2; border-radius: 8px; display: flex; align-items: center; justify-content: center; font-size: 39px; color: #606060; line-height: 60px; }

.ma-row { height: 163px; padding: 18px 16px 0; display: flex; align-items: flex-start; }
.chip { box-sizing: border-box; height: 46px; border: 2px solid #e5e7ea; border-radius: 7px; background: #f6f7f9; display: flex; align-items: center; justify-content: space-between; padding: 0 7px 0 3px; font-size: 38px; line-height: 42px; color: #222; flex: none; }
.ma-chip { width: 108px; margin-top: 48px; font-size: 36px; padding: 0 8px; }
.ma-grid { width: 593px; display: grid; grid-template-columns: 194px 199px 200px; grid-template-rows: 48px 48px 48px; font-size: 30px; }
.ma { display: flex; align-items: center; justify-content: flex-end; gap: 6px; line-height: 40px; }
.dk { margin: 49px 40px 0 50px; box-sizing: border-box; width: 126px; height: 45px; background: #d5602a; color: #fff; border-radius: 6px; display: flex; padding: 0 6px 6px 13px; justify-content: space-between; align-items: flex-end; font-size: 37px; }
.dk .t { line-height: 33px; }
.adj { width: 132px; margin-top: 48px; font-size: 36px; padding: 0 0 0 11px; }

.sub-head { height: 62px; padding: 7px 0 0 16px; display: flex; align-items: flex-start; font-size: 40px; }
.val { display: flex; align-items: center; gap: 8px; height: 46px; line-height: 46px; margin-left: 21px; }
.chip + .val { margin-left: 3px; }
.vol-chip { width: 151px; }
.vol-head .val { gap: 7px; margin-left: 11px; }
.vol-head .v0 { margin-left: 4px; color: #222; }
.v1 { color: #e09b42; } .v2 { color: #b843c8; } .v3 { color: #4a9b2f; } .v4 { color: #888; font-size: 36px; }

.chart text { font-family: Roboto, "Noto Sans CJK SC", sans-serif; }
.mark-bg { font-size: 104px; font-weight: 900; fill: #f7f7f7; }
.ax { font-size: 39px; }
.ax2 { font-size: 42px; }
.ax3 { font-size: 30px; }
.mk { font-size: 39px; }
.bee { font-size: 33px; font-weight: 500; fill: #fff; }

.dock { flex: 1; border-top: 2px solid #dcdfe2; background: #f7f8fa; display: flex; color: #606060; }
.index { width: 275px; padding: 8px 0 0 36px; box-sizing: border-box; color: #c94741; }
.index svg { margin-left: 92px; }
.ix1 { margin-left: 6px; font-size: 47px; line-height: 60px; height: 60px; margin-top: 2px; }
.ix2 { font-size: 44px; line-height: 40px; display: flex; align-items: center; gap: 36px; width: 240px; }
.ix2 .gray { font-size: 40px; color: #606060; }
.act { width: 201px; padding-top: 7px; display: flex; flex-direction: column; align-items: center; font-size: 39px; line-height: 50px; }
.act .t { margin-top: 13px; }
</style>
